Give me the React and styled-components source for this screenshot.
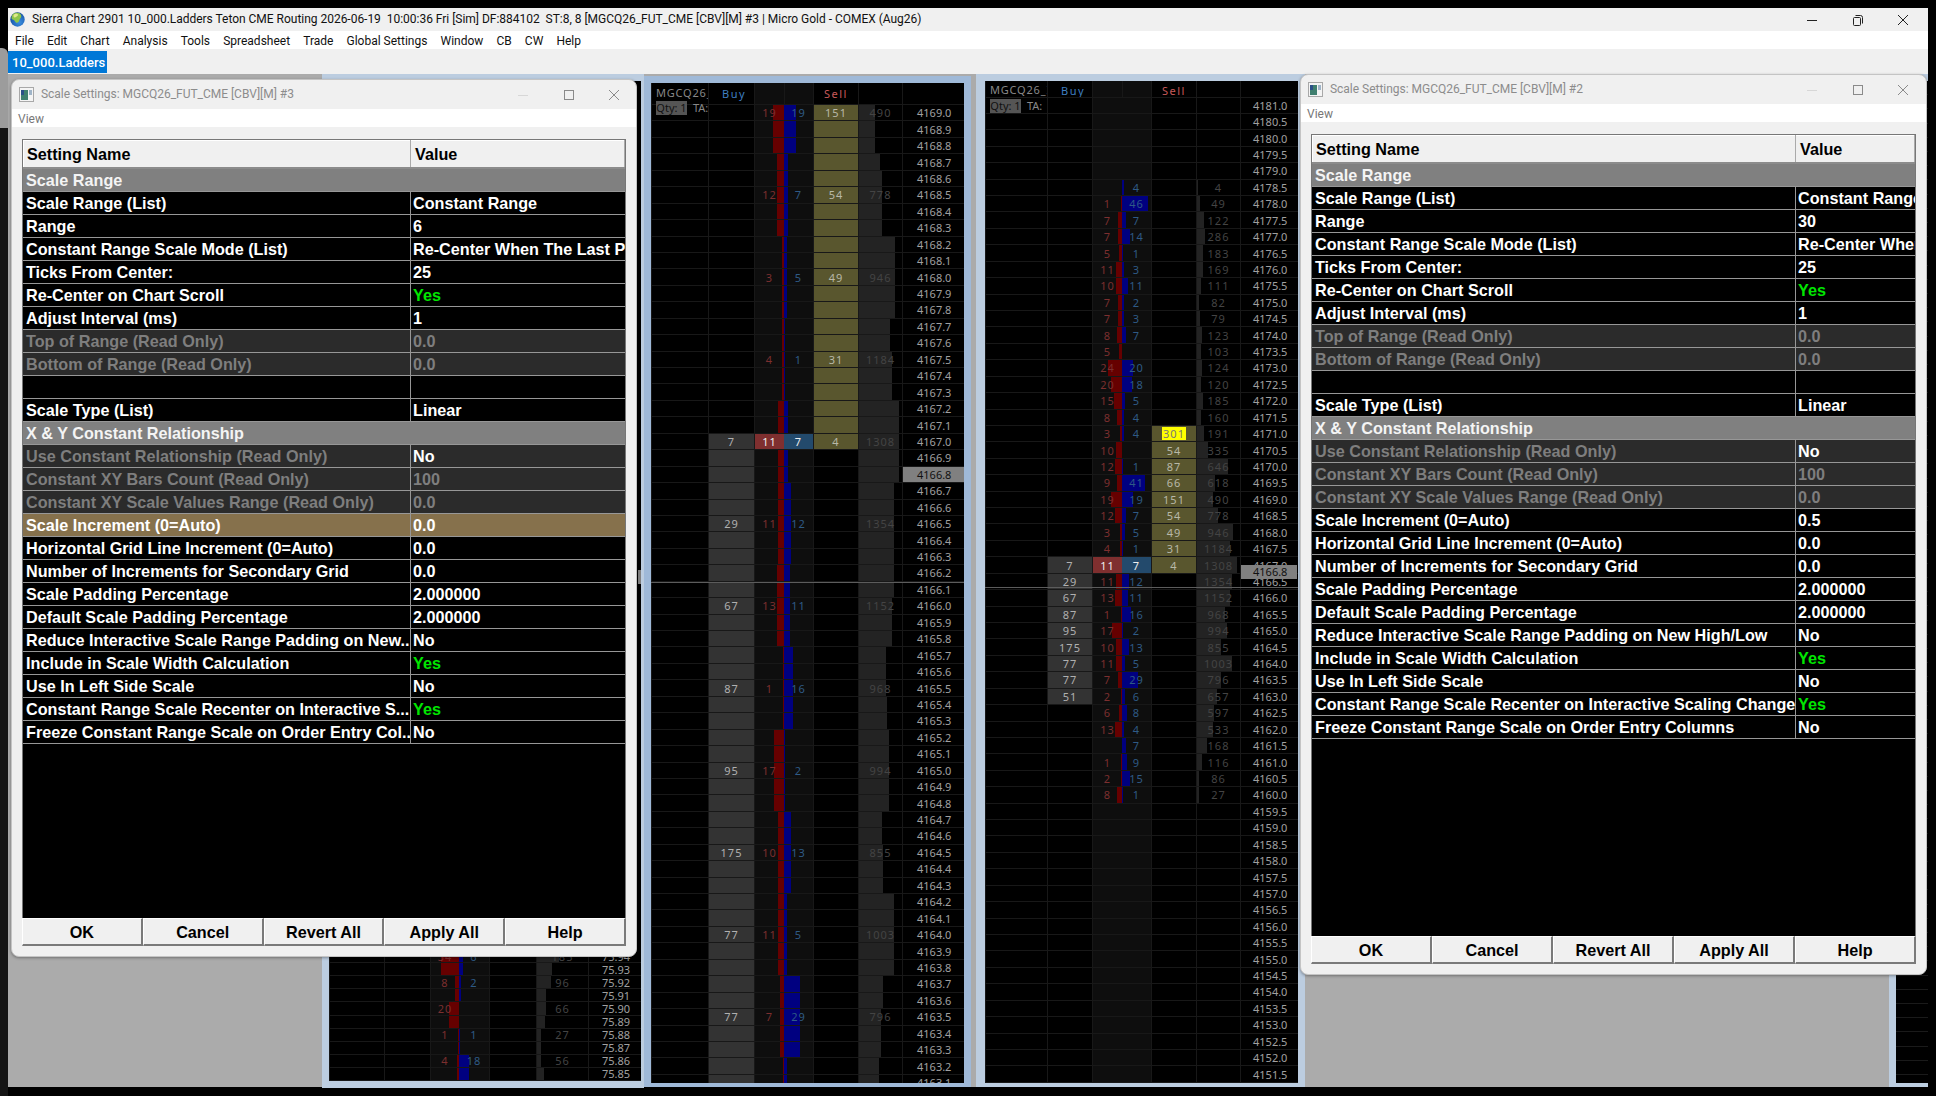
import React from "react";
import styled, { createGlobalStyle } from "styled-components";

const GlobalStyle = createGlobalStyle`
  html, body {
    margin: 0;
    padding: 0;
    background: #000;
    overflow: hidden;
  }
  #root {
    width: 1936px;
    height: 1096px;
    position: relative;
    overflow: hidden;
  }
`;

const UI_FONT = `"Roboto", "Noto Sans", sans-serif`;
const GRID_FONT = `"Liberation Sans", Arial, sans-serif`;
const CHART_FONT = `"Noto Sans", "Liberation Sans", sans-serif`;

const BehindWindow = styled.div`
  position: absolute;
  left: 0;
  top: 48px;
  width: 8px;
  height: 80px;
  background: #9c9c9c;
  border-top-right-radius: 6px;
`;
const BehindStrip = styled.div`
  position: absolute;
  left: 0;
  top: 128px;
  width: 8px;
  height: 968px;
  background: #141414;
`;

const AppShell = styled.div`
  position: absolute;
  left: 8px;
  top: 8px;
  width: 1920px;
  height: 1079px;
  display: flex;
  flex-direction: column;
  background: #ababab;
`;
const AppTitleBar = styled.div`
  height: 23px;
  flex: none;
  display: flex;
  align-items: center;
  background: #f0f0f0;
  padding-left: 2px;
  font: 12px ${UI_FONT};
  letter-spacing: -0.02px;
  color: #111;
`;
const TitleText = styled.span`
  margin-left: 7px;
  margin-top: -1px;
  white-space: pre;
  flex: 1;
`;
const DialogTitleText = styled.span`
  margin-top: -1px;
  white-space: pre;
  flex: 1;
`;
const Controls = styled.div`
  display: flex;
  align-items: center;
  flex: none;
  margin-right: ${(p) => p.$right}px;
  gap: 33.5px;
  color: ${(p) => p.$color};
`;
const MenuBar = styled.div`
  height: 18px;
  flex: none;
  box-sizing: border-box;
  padding: 1px 0 0 7px;
  display: flex;
  align-items: center;
  gap: 13.1px;
  background: #fff;
  font: 12px ${UI_FONT};
  color: #111;
`;
const TabBar = styled.div`
  height: 25px;
  flex: none;
  background: #f0f0f0;
  padding-top: 2px;
  box-sizing: border-box;
`;
const Tab = styled.div`
  width: 99px;
  height: 22px;
  box-sizing: border-box;
  padding-left: 4px;
  display: flex;
  align-items: center;
  background: #0078d7;
  color: #fff;
  font: 500 13px ${UI_FONT};
`;
const Workspace = styled.div`
  flex: 1;
  position: relative;
  background: #ababab;
`;

const ChartWindow = styled.div`
  position: absolute;
  left: ${(p) => p.$x}px;
  top: ${(p) => p.$y}px;
  width: ${(p) => p.$w}px;
  height: ${(p) => p.$h}px;
  box-sizing: border-box;
  padding: ${(p) => p.$pad};
  background: ${(p) => p.$frame};
`;
const ChartBody = styled.div`
  position: relative;
  width: 100%;
  height: 100%;
  overflow: hidden;
  background: #000;
  display: flex;
  flex-direction: column;
  justify-content: ${(p) => (p.$bottom ? "flex-end" : "flex-start")};
  font: 11px ${CHART_FONT};
`;
const EmptyChart = styled(ChartBody)`
  background: repeating-linear-gradient(
    to bottom,
    #000 0,
    #000 13.2px,
    #1a1a1a 13.2px,
    #1a1a1a 14.2px
  );
`;
const HeaderRow = styled.div`
  flex: none;
  display: grid;
  grid-template-columns: ${(p) => p.$cols};
  height: ${(p) => p.$h}px;
  box-sizing: border-box;
  border-bottom: 1px solid #181818;
  font-size: 11px;
`;
const HeaderCell = styled.div`
  position: relative;
  overflow: hidden;
  border-left: 1px solid #181818;
  background: ${(p) => (p.$dim ? "#0e0e0e" : "#000")};
  color: ${(p) => p.$color || "#888"};
  padding: ${(p) => p.$padTop}px 0 0 ${(p) => p.$padLeft || 0}px;
  letter-spacing: ${(p) => p.$spacing || 1.5}px;
  white-space: nowrap;
`;
const QtyTag = styled.div`
  position: absolute;
  left: ${(p) => p.$x}px;
  top: ${(p) => p.$y}px;
  display: flex;
  align-items: center;
  z-index: 3;
  color: #888;
`;
const QtyBox = styled.span`
  width: 31px;
  height: 14px;
  line-height: 14px;
  text-align: center;
  background: #555;
  color: #111;
  margin-right: 6px;
`;
const Row = styled.div`
  flex: none;
  display: grid;
  grid-template-columns: ${(p) => p.$cols};
  height: ${(p) => p.$h}px;
  box-sizing: border-box;
  border-bottom: 1px solid #181818;
`;
const Cell = styled.div`
  position: relative;
  min-width: 0;
  display: flex;
  align-items: center;
  justify-content: center;
  border-left: 1px solid #181818;
  letter-spacing: 1px;
  line-height: 1;
  overflow: hidden;
`;
const BlankCell = styled(Cell)`
  background: #000;
`;
const BuyCell = styled(Cell)`
  background: ${(p) => (p.$filled ? "#333" : "#000")};
  color: #b0b0b0;
`;
const BidCell = styled(Cell)`
  background: ${(p) => (p.$hot ? "#7f2f2f" : "#0e0e0e")};
  color: ${(p) => (p.$hot ? "#eee" : "#7c2f2f")};
`;
const AskCell = styled(Cell)`
  border-left: none;
  background: ${(p) => (p.$hot ? "#234a6c" : "#0e0e0e")};
  color: ${(p) => (p.$hot ? "#eee" : "#2f5a85")};
`;
const SellCell = styled(Cell)`
  background: ${(p) => (p.$filled ? "#59562e" : "#000")};
  color: #b8b8a8;
`;
const ProfileCell = styled(Cell)`
  color: #444;
`;
const PriceCell = styled(Cell)`
  justify-content: flex-start;
  padding-left: ${(p) => p.$inset}px;
  background: ${(p) => (p.$last ? "#808080" : "#000")};
  color: ${(p) => (p.$last ? "#111" : "#a0a0a0")};
  letter-spacing: 0;
`;
const RedBar = styled.div`
  position: absolute;
  right: 0;
  top: 0;
  bottom: 0;
  background: #660000;
`;
const BlueBar = styled.div`
  position: absolute;
  left: 0;
  top: 0;
  bottom: 0;
  background: #000080;
`;
const ProfileBar = styled.div`
  position: absolute;
  left: 0;
  top: 0;
  bottom: 0;
  background: #232323;
`;
const Label = styled.span`
  position: relative;
`;
const FlashLabel = styled.span`
  position: relative;
  background: #ffff00;
  color: #777;
  padding: 1px 1px;
`;
const LastLine = styled.div`
  position: absolute;
  left: 0;
  right: 0;
  top: ${(p) => p.$top}px;
  height: 1px;
  background: #5c5c5c;
  z-index: 2;
`;
const LastTag = styled.div`
  position: absolute;
  left: ${(p) => p.$left}px;
  top: ${(p) => p.$top}px;
  width: ${(p) => p.$w}px;
  height: 14px;
  line-height: 14px;
  padding-left: 12px;
  box-sizing: border-box;
  background: #808080;
  color: #111;
  z-index: 2;
`;

const Dialog = styled.div`
  position: absolute;
  left: ${(p) => p.$x}px;
  top: ${(p) => p.$y}px;
  width: ${(p) => p.$w}px;
  height: ${(p) => p.$h}px;
  box-sizing: border-box;
  display: flex;
  flex-direction: column;
  background: #f0f0f0;
  border: 1px solid #c4c4c4;
  border-radius: 8px;
  overflow: hidden;
  box-shadow: 0 1px 3px rgba(0, 0, 0, 0.35);
  z-index: 5;
`;
const DialogTitle = styled.div`
  flex: none;
  height: 29px;
  display: flex;
  align-items: center;
  padding-left: 7px;
  font: 12px ${UI_FONT};
  letter-spacing: -0.02px;
  color: #8c8c8c;
`;
const DialogMenu = styled.div`
  flex: none;
  height: 18px;
  line-height: 20px;
  background: #fff;
  padding-left: 6px;
  font: 12px/20px ${UI_FONT};
  color: #777;
`;
const DialogBody = styled.div`
  flex: 1;
  min-height: 0;
  display: flex;
  flex-direction: column;
  padding: 12px 10px 10px 10px;
`;
const Grid = styled.div`
  flex: 1;
  min-height: 0;
  display: flex;
  flex-direction: column;
  background: #000;
  border: 1px solid #777;
  border-bottom: none;
  font: bold 16.2px ${GRID_FONT};
  color: #fff;
`;
const GridHeader = styled.div`
  flex: none;
  height: 29px;
  box-sizing: border-box;
  display: grid;
  grid-template-columns: ${(p) => p.$name}px 1fr;
  background: #f0f0f0;
  color: #000;
  border-bottom: 2px solid #8c8c8c;
  box-shadow: inset 1px 1px 0 #fff;
`;
const GridHeaderCell = styled.div`
  display: flex;
  align-items: center;
  padding: 2px 0 0 4px;
  border-right: 1px solid #aaa;
`;
const SettingRow = styled.div`
  flex: none;
  height: 23px;
  box-sizing: border-box;
  display: grid;
  grid-template-columns: ${(p) => p.$name}px 1fr;
  background: ${(p) => p.$bg};
  border-bottom: 1px solid #979797;
`;
const SectionRow = styled.div`
  flex: none;
  height: 23px;
  box-sizing: border-box;
  display: flex;
  align-items: center;
  padding-left: 3px;
  background: #808080;
  border-bottom: 1px solid #979797;
  color: #f4f4f4;
`;
const SettingName = styled.div`
  display: flex;
  align-items: center;
  padding-left: 3px;
  white-space: nowrap;
  overflow: hidden;
  border-right: 1px solid #979797;
  color: ${(p) => (p.$readOnly ? "#7e7e7e" : "#fff")};
`;
const SettingValue = styled.div`
  display: flex;
  align-items: center;
  padding-left: 2px;
  min-width: 0;
  white-space: nowrap;
  overflow: hidden;
  color: ${(p) => p.$color};
`;
const ButtonRow = styled.div`
  flex: none;
  height: 28px;
  display: flex;
`;
const DialogButton = styled.button`
  flex: 1;
  padding: 2px 0 0;
  background: #f0f0f0;
  border-style: solid;
  border-width: 1px 2px 2px 1px;
  border-color: #fff #7a7a7a #7a7a7a #fff;
  font: bold 16.2px ${GRID_FONT};
  color: #000;
`;

const Minimize = ({ faded }) => (
  <svg width="12" height="12" viewBox="0 0 12 12">
    <path d="M1 6.5h10" stroke="currentColor" strokeOpacity={faded ? 0.25 : 1} fill="none" />
  </svg>
);
const Maximize = () => (
  <svg width="12" height="12" viewBox="0 0 12 12">
    <rect x="1.5" y="1.5" width="9" height="9" stroke="currentColor" fill="none" />
  </svg>
);
const Restore = () => (
  <svg width="12" height="12" viewBox="0 0 12 12">
    <rect x="1.5" y="3.5" width="7" height="8" rx="1" stroke="currentColor" fill="none" />
    <path d="M3.5 1.5h5a2 2 0 0 1 2 2v6" stroke="currentColor" fill="none" />
  </svg>
);
const Close = () => (
  <svg width="12" height="12" viewBox="0 0 12 12">
    <path d="M1 1l10 10M11 1L1 11" stroke="currentColor" fill="none" />
  </svg>
);
const Globe = () => (
  <svg width="15" height="15" viewBox="0 0 15 15">
    <defs>
      <radialGradient id="globeFill" cx="0.62" cy="0.7" r="0.75">
        <stop offset="0" stopColor="#3c8fe0" />
        <stop offset="0.7" stopColor="#1c5fb3" />
        <stop offset="1" stopColor="#123f85" />
      </radialGradient>
    </defs>
    <circle cx="7.5" cy="7.5" r="7.2" fill="url(#globeFill)" />
    <path d="M3 2c3-2 7-1.500 8 1s-1 3-1.500 5-2.500 4-4 2S4 8 2.500 7.500 1.500 3.500 3 2z" fill="#8fc64a" />
    <path d="M4 2.500c1.500-1 3.500-.8 4 .3S6 4.800 5 5.500 2.800 3.500 4 2.500z" fill="#e2e88a" />
  </svg>
);
const WindowGlyph = styled.svg`
  margin-right: 7px;
  flex: none;
`;
const WindowIcon = () => (
  <WindowGlyph width="15" height="15" viewBox="0 0 15 15">
    <rect x="0.5" y="0.5" width="14" height="14" fill="#f4f4f4" stroke="#a8a8a8" />
    <rect x="2" y="3" width="7" height="10" fill="#3f7f6f" />
    <rect x="2" y="3" width="3" height="5" fill="#2b4f88" />
    <rect x="10" y="3" width="3" height="5" fill="#9fb4c8" />
  </WindowGlyph>
);

const MENU = ["File", "Edit", "Chart", "Analysis", "Tools", "Spreadsheet", "Trade", "Global Settings", "Window", "CB", "CW", "Help"];

const SETTINGS = [
  { section: "Scale Range" },
  { name: "Scale Range (List)", value: "Constant Range" },
  { name: "Range", key: "range" },
  { name: "Constant Range Scale Mode (List)", value: "Re-Center When The Last Price Moves" },
  { name: "Ticks From Center:", value: "25" },
  { name: "Re-Center on Chart Scroll", value: "Yes", green: true },
  { name: "Adjust Interval (ms)", value: "1" },
  { name: "Top of Range (Read Only)", value: "0.0", readOnly: true, dimValue: true },
  { name: "Bottom of Range (Read Only)", value: "0.0", readOnly: true, dimValue: true },
  { name: "", value: "" },
  { name: "Scale Type (List)", value: "Linear" },
  { section: "X & Y Constant Relationship" },
  { name: "Use Constant Relationship (Read Only)", value: "No", readOnly: true },
  { name: "Constant XY Bars Count (Read Only)", value: "100", readOnly: true, dimValue: true },
  { name: "Constant XY Scale Values Range (Read Only)", value: "0.0", readOnly: true, dimValue: true },
  { name: "Scale Increment (0=Auto)", key: "increment", accent: true },
  { name: "Horizontal Grid Line Increment (0=Auto)", value: "0.0" },
  { name: "Number of Increments for Secondary Grid", value: "0.0" },
  { name: "Scale Padding Percentage", value: "2.000000" },
  { name: "Default Scale Padding Percentage", value: "2.000000" },
  { name: "Reduce Interactive Scale Range Padding on New High/Low", short: "Reduce Interactive Scale Range Padding on New...", value: "No" },
  { name: "Include in Scale Width Calculation", value: "Yes", green: true },
  { name: "Use In Left Side Scale", value: "No" },
  { name: "Constant Range Scale Recenter on Interactive Scaling Change", short: "Constant Range Scale Recenter on Interactive S...", value: "Yes", green: true },
  { name: "Freeze Constant Range Scale on Order Entry Columns", short: "Freeze Constant Range Scale on Order Entry Col...", value: "No" },
];

const SettingsDialog = ({ x, y, w, h, nameWidth, title, range, increment, accentRow, useShort, closeInset }) => (
  <Dialog $x={x} $y={y} $w={w} $h={h}>
    <DialogTitle>
      <WindowIcon />
      <DialogTitleText>{title}</DialogTitleText>
      <Controls $right={closeInset} $color="#8a8a8a">
        <Minimize faded />
        <Maximize />
        <Close />
      </Controls>
    </DialogTitle>
    <DialogMenu>View</DialogMenu>
    <DialogBody>
      <Grid>
        <GridHeader $name={nameWidth}>
          <GridHeaderCell>Setting Name</GridHeaderCell>
          <GridHeaderCell>Value</GridHeaderCell>
        </GridHeader>
        {SETTINGS.map((row, i) => {
          if (row.section) return <SectionRow key={i}>{row.section}</SectionRow>;
          const value = row.key === "range" ? range : row.key === "increment" ? increment : row.value;
          const accent = row.accent && accentRow;
          const bg = accent ? "#86714c" : row.readOnly ? "#2b2b2b" : "#000";
          const color = row.green ? "#00e600" : row.dimValue ? "#7e7e7e" : "#fff";
          return (
            <SettingRow key={i} $name={nameWidth} $bg={bg}>
              <SettingName $readOnly={row.readOnly}>{useShort && row.short ? row.short : row.name}</SettingName>
              <SettingValue $color={color}>{value}</SettingValue>
            </SettingRow>
          );
        })}
      </Grid>
      <ButtonRow>
        {["OK", "Cancel", "Revert All", "Apply All", "Help"].map((b) => (
          <DialogButton key={b}>{b}</DialogButton>
        ))}
      </ButtonRow>
    </DialogBody>
  </Dialog>
);

// one cell per column; bars are pixel widths read off the ladder
const LadderRow = ({ r, cols, h, inset, digits }) => (
  <Row $cols={cols} $h={h}>
    <BlankCell />
    <BuyCell $filled={r.buyFill}>{r.buy ? <Label>{r.buy}</Label> : null}</BuyCell>
    <BidCell $hot={r.hot}>
      {!r.hot && r.red ? <RedBar style={{ width: r.red }} /> : null}
      {r.bid ? <Label>{r.bid}</Label> : null}
    </BidCell>
    <AskCell $hot={r.hot}>
      {!r.hot && r.blue ? <BlueBar style={{ width: r.blue }} /> : null}
      {r.ask ? <Label>{r.ask}</Label> : null}
    </AskCell>
    <SellCell $filled={r.sellFill}>
      {r.flash ? <FlashLabel>{r.sell}</FlashLabel> : r.sell ? <Label>{r.sell}</Label> : null}
    </SellCell>
    <ProfileCell>
      {r.prof ? <ProfileBar style={{ width: r.prof }} /> : null}
      {r.vol ? <Label>{r.vol}</Label> : null}
    </ProfileCell>
    <PriceCell $inset={inset} $last={r.last}>
      {r.price.toFixed(digits)}
    </PriceCell>
  </Row>
);

const LadderHeader = ({ cols, h, padTop, buyPad, sellPad, symbol }) => (
  <HeaderRow $cols={cols} $h={h}>
    <HeaderCell $padTop={padTop - 1} $padLeft={4} $spacing={0.8}>{symbol}</HeaderCell>
    <HeaderCell $padTop={padTop} $padLeft={buyPad} $color="#3f7fc0">Buy</HeaderCell>
    <HeaderCell $dim $padTop={padTop} />
    <HeaderCell $dim $padTop={padTop} />
    <HeaderCell $padTop={padTop} $padLeft={sellPad} $color="#c85a5a">Sell</HeaderCell>
    <HeaderCell $padTop={padTop} />
    <HeaderCell $padTop={padTop} />
  </HeaderRow>
);

// middle ladder: 0.1 ticks grouped in fives, numbers on the centre row
const GROUPS_B = [
  { n: 3, at: 0, red: 11, blue: 12, bid: 19, ask: 19, sell: 151, vol: 490, prof: [16, 16, 16] },
  { red: 7, blue: 4, bid: 12, ask: 7, sell: 54, vol: 778, prof: [21, 23, 23, 23, 23] },
  { red: 2, blue: 3, bid: 3, ask: 5, sell: 49, vol: 946, prof: [36, 36, 36, 36, 36] },
  { red: 2, blue: 1, bid: 4, ask: 1, sell: 31, vol: 1184, prof: [31, 31, 33, 33, 33] },
  { red: 6, blue: 4, bid: 11, ask: 7, sell: 4, buy: 7, hot: true, vol: 1308, prof: [40, 40, 40, 40, 40] },
  { red: 6, blue: 7, bid: 11, ask: 12, buy: 29, vol: 1354, prof: [35, 35, 35, 35, 35] },
  { red: 7, blue: 6, bid: 13, ask: 11, buy: 67, vol: 1152, prof: [35, 35, 33, 33, 33] },
  { red: 1, blue: 9, bid: 1, ask: 16, buy: 87, vol: 968, prof: [27, 27, 27, 28, 28] },
  { red: 10, blue: 1, bid: 17, ask: 2, buy: 95, vol: 994, prof: [30, 30, 30, 30, 30] },
  { red: 6, blue: 7, bid: 10, ask: 13, buy: 175, vol: 855, prof: [23, 23, 24, 24, 24] },
  { red: 6, blue: 3, bid: 11, ask: 5, buy: 77, vol: 1003, prof: [35, 35, 35, 35, 35] },
  { red: 4, blue: 16, bid: 7, ask: 29, buy: 77, vol: 796, prof: [24, 24, 22, 22, 22] },
  { n: 2, at: -1, red: 1, blue: 3, prof: [20, 20] },
];

const buildRowsB = () => {
  const rows = [];
  GROUPS_B.forEach((g) => {
    const n = g.n || 5;
    const at = g.at === undefined ? 2 : g.at;
    for (let j = 0; j < n; j++) {
      const idx = rows.length;
      const mid = j === at;
      rows.push({
        price: 4169 - idx * 0.1,
        red: g.red,
        blue: g.blue,
        prof: g.prof[j],
        bid: mid ? g.bid : null,
        ask: mid ? g.ask : null,
        sell: mid ? g.sell : null,
        buy: mid ? g.buy : null,
        vol: mid ? g.vol : null,
        hot: mid && g.hot,
        sellFill: idx <= 20,
        buyFill: idx >= 20,
        last: idx === 22,
      });
    }
  });
  return rows;
};

// right ladder: [bid, ask, sell, buy, vol, red, blue, prof]
const ROWS_C = [
  [], [], [], [], [],
  [0, 4, 0, 0, 4, 0, 2, 1],
  [1, 46, 0, 0, 49, 1, 26, 3],
  [7, 7, 0, 0, 122, 4, 4, 7],
  [7, 14, 0, 0, 286, 4, 8, 8],
  [5, 1, 0, 0, 183, 3, 1, 6],
  [11, 3, 0, 0, 169, 6, 2, 6],
  [10, 11, 0, 0, 111, 6, 6, 4],
  [7, 2, 0, 0, 82, 4, 2, 2],
  [7, 3, 0, 0, 79, 4, 2, 3],
  [8, 7, 0, 0, 123, 5, 4, 5],
  [5, 0, 0, 0, 103, 3, 0, 4],
  [24, 20, 0, 0, 124, 14, 11, 5],
  [20, 18, 0, 0, 120, 11, 10, 4],
  [15, 5, 0, 0, 185, 8, 3, 6],
  [8, 4, 0, 0, 160, 5, 2, 4],
  [3, 4, 301, 0, 191, 2, 2, 7],
  [10, 0, 54, 0, 335, 6, 0, 11],
  [12, 1, 87, 0, 646, 7, 1, 31],
  [9, 41, 66, 0, 618, 5, 23, 18],
  [19, 19, 151, 0, 490, 11, 11, 16],
  [12, 7, 54, 0, 778, 7, 4, 21],
  [3, 5, 49, 0, 946, 2, 3, 36],
  [4, 1, 31, 0, 1184, 2, 1, 33],
  [11, 7, 4, 7, 1308, 6, 4, 40],
  [11, 12, 0, 29, 1354, 6, 7, 35],
  [13, 11, 0, 67, 1152, 7, 6, 33],
  [1, 16, 0, 87, 968, 1, 9, 28],
  [17, 2, 0, 95, 994, 10, 1, 30],
  [10, 13, 0, 175, 855, 6, 7, 24],
  [11, 5, 0, 77, 1003, 6, 3, 35],
  [7, 29, 0, 77, 796, 4, 16, 24],
  [2, 6, 0, 51, 657, 1, 3, 20],
  [6, 8, 0, 0, 597, 3, 5, 17],
  [13, 4, 0, 0, 533, 7, 2, 16],
  [0, 7, 0, 0, 168, 0, 4, 10],
  [1, 9, 0, 0, 116, 1, 5, 5],
  [2, 15, 0, 0, 86, 1, 8, 2],
  [8, 1, 0, 0, 27, 5, 1, 2],
];

const buildRowsC = () => {
  const rows = [];
  for (let i = 0; i < 60; i++) {
    const [bid, ask, sell, buy, vol, red, blue, prof] = ROWS_C[i] || [];
    rows.push({
      price: 4181 - i * 0.5,
      bid, ask, sell, buy, vol, red, blue, prof,
      sellFill: !!sell,
      buyFill: !!buy,
      hot: i === 28,
      flash: sell === 301,
    });
  }
  return rows;
};

// left ladder only shows its last rows under the dialog
const ROWS_A = [
  { price: 75.94, bid: 34, ask: 6, vol: 185, red: 18, blue: 4, prof: 22 },
  { price: 75.93, red: 18, blue: 4, prof: 15 },
  { price: 75.92, bid: 8, ask: 2, vol: 96, red: 4, blue: 2, prof: 14 },
  { price: 75.91, red: 4, blue: 2, prof: 9 },
  { price: 75.9, bid: 20, vol: 66, red: 10, blue: 0, prof: 9 },
  { price: 75.89, red: 10, blue: 0, prof: 8 },
  { price: 75.88, bid: 1, ask: 1, vol: 27, red: 1, blue: 1, prof: 4 },
  { price: 75.87, red: 1, blue: 1, prof: 4 },
  { price: 75.86, bid: 4, ask: 18, vol: 56, red: 2, blue: 10, prof: 4 },
  { price: 75.85, red: 2, blue: 10, prof: 7 },
];

const COLS_A = "55px 46px 29px 30px 47px 52px 53px";
const COLS_B = "57px 46px 30px 29px 45px 44px 62px";
const COLS_C = "62px 45px 30px 29px 45px 44px 58px";

const App = () => {
  const rowsB = buildRowsB();
  const rowsC = buildRowsC();
  return (
    <>
      <GlobalStyle />
      <BehindWindow />
      <BehindStrip />
      <AppShell>
        <AppTitleBar>
          <Globe />
          <TitleText>
            {"Sierra Chart 2901 10_000.Ladders Teton CME Routing 2026-06-19  10:00:36 Fri [Sim] DF:884102  ST:8, 8 [MGCQ26_FUT_CME [CBV][M] #3 | Micro Gold - COMEX (Aug26)"}
          </TitleText>
          <Controls $right={19} $color="#222">
            <Minimize />
            <Restore />
            <Close />
          </Controls>
        </AppTitleBar>
        <MenuBar>
          {MENU.map((m) => (
            <span key={m}>{m}</span>
          ))}
        </MenuBar>
        <TabBar>
          <Tab>10_000.Ladders</Tab>
        </TabBar>
        <Workspace>
          <ChartWindow $x={314} $y={0} $w={322} $h={1014} $pad="7px 3px 7px 7px" $frame="#bccde0">
            <ChartBody $bottom>
              <LastTag $left={309} $top={489} $w={10} />
              {ROWS_A.map((r) => (
                <LadderRow key={r.price} r={r} cols={COLS_A} h={13.1} inset={13} digits={2} />
              ))}
            </ChartBody>
          </ChartWindow>

          <ChartWindow $x={636} $y={2} $w={327} $h={1011} $pad="7px 7px 4px 7px" $frame="#9fb9d8">
            <ChartBody>
              <LadderHeader cols={COLS_B} h={22} padTop={3} buyPad={13} sellPad={10} symbol="MGCQ26_" />
              <QtyTag $x={5} $y={17}>
                <QtyBox>Qty: 1</QtyBox>TA:
              </QtyTag>
              {rowsB.map((r, i) => (
                <LadderRow key={i} r={r} cols={COLS_B} h={16.45} inset={14} digits={1} />
              ))}
              <LastLine $top={499} />
            </ChartBody>
          </ChartWindow>

          <ChartWindow $x={968} $y={0} $w={329} $h={1013} $pad="7px 7px 4px 9px" $frame="#bccde0">
            <ChartBody>
              <LadderHeader cols={COLS_C} h={16.5} padTop={2} buyPad={13} sellPad={10} symbol="MGCQ26_I" />
              <QtyTag $x={5} $y={17}>
                <QtyBox>Qty: 1</QtyBox>TA:
              </QtyTag>
              {rowsC.map((r, i) => (
                <LadderRow key={i} r={r} cols={COLS_C} h={16.43} inset={12} digits={1} />
              ))}
              <LastTag $left={256} $top={484} $w={56}>4166.8</LastTag>
              <LastLine $top={506} />
            </ChartBody>
          </ChartWindow>

          <ChartWindow $x={1881} $y={0} $w={39} $h={1013} $pad="7px 0 4px 7px" $frame="#bccde0">
            <EmptyChart />
          </ChartWindow>
        </Workspace>
      </AppShell>

      <SettingsDialog
        x={11}
        y={79}
        w={626}
        h={878}
        nameWidth={388}
        title="Scale Settings: MGCQ26_FUT_CME [CBV][M] #3"
        range="6"
        increment="0.0"
        accentRow
        useShort
        closeInset={16}
      />
      <SettingsDialog
        x={1300}
        y={74}
        w={627}
        h={901}
        nameWidth={484}
        title="Scale Settings: MGCQ26_FUT_CME [CBV][M] #2"
        range="30"
        increment="0.5"
        closeInset={17}
      />
    </>
  );
};

export default App;
